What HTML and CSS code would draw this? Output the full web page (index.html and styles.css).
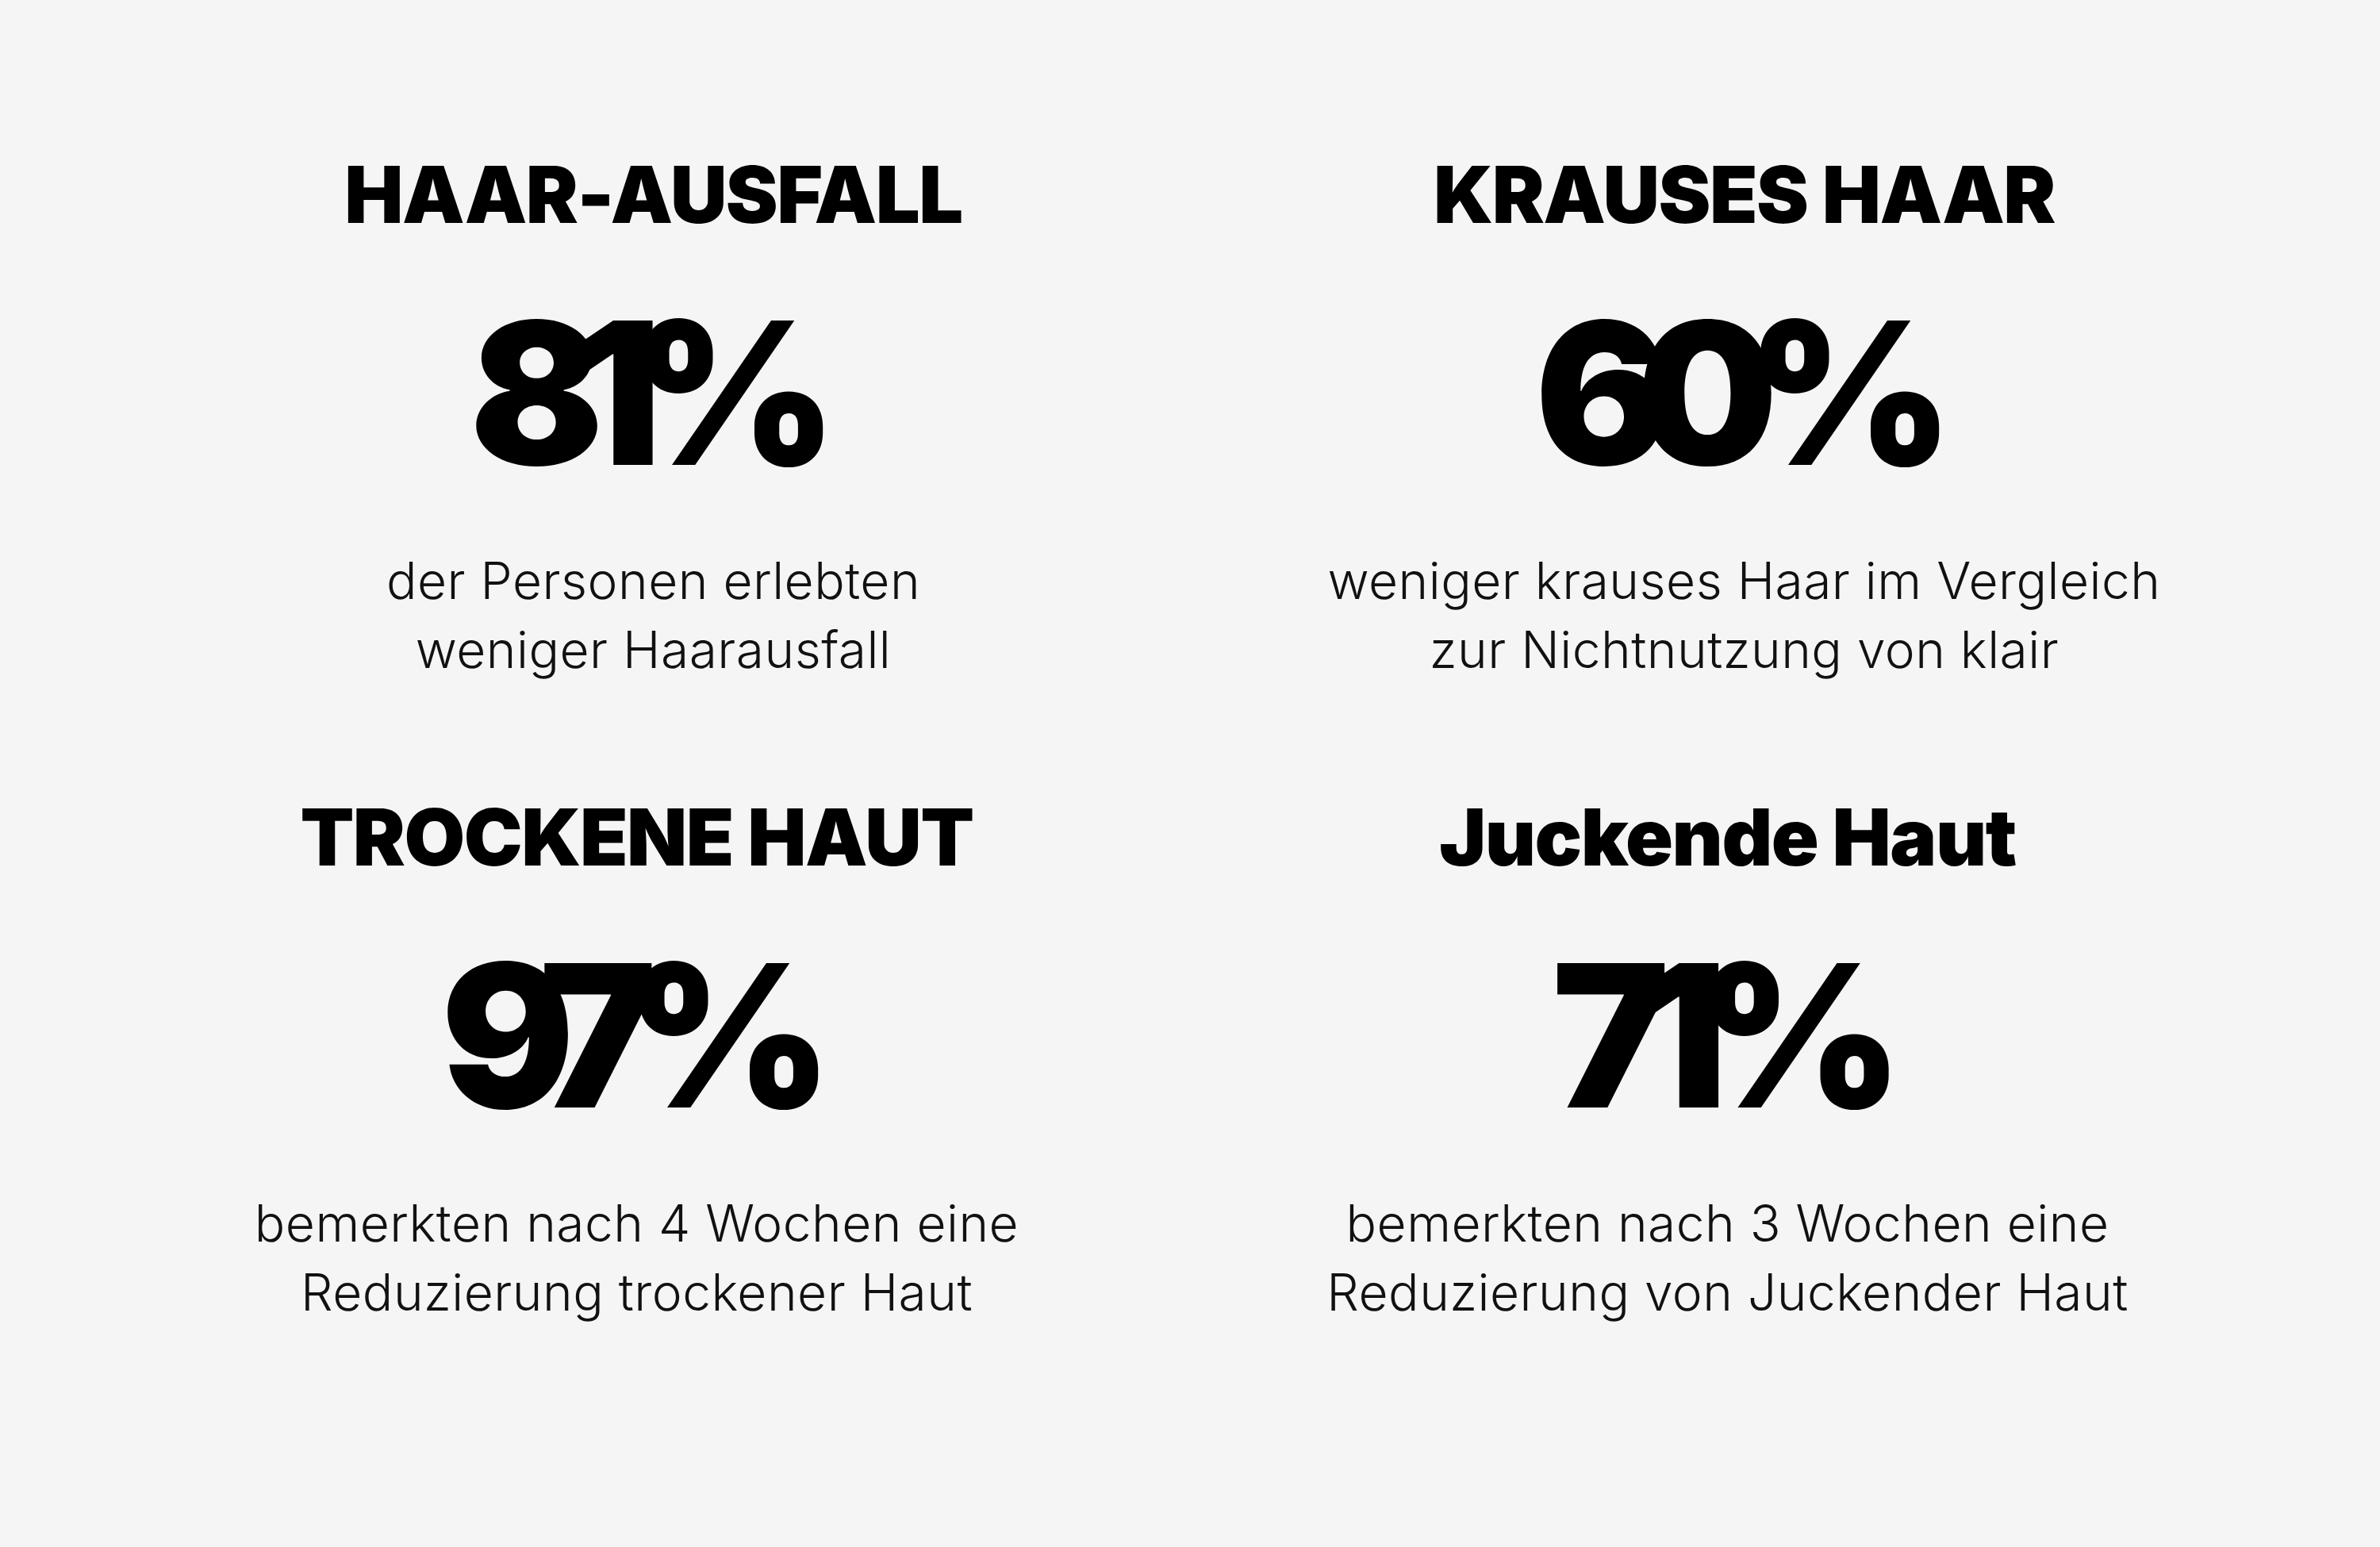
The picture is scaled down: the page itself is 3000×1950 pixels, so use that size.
FILE: index.html
```html
<!DOCTYPE html>
<html lang="de">
<head>
<meta charset="utf-8">
<title>Ergebnisse</title>
<link rel="stylesheet" href="styles.css">
</head>
<body>
<main class="stats">
  <section class="stat stat--top">
    <h2 class="stat-title">HAAR-AUSFALL</h2>
    <p class="stat-value">81%</p>
    <p class="stat-text">der Personen erlebten<br>weniger Haarausfall</p>
  </section>
  <section class="stat stat--top">
    <h2 class="stat-title">KRAUSES HAAR</h2>
    <p class="stat-value">60%</p>
    <p class="stat-text">weniger krauses Haar im Vergleich<br>zur Nichtnutzung von klair</p>
  </section>
  <section class="stat stat--bottom">
    <h2 class="stat-title">TROCKENE HAUT</h2>
    <p class="stat-value">97%</p>
    <p class="stat-text">bemerkten nach 4 Wochen eine<br>Reduzierung trockener Haut</p>
  </section>
  <section class="stat stat--bottom">
    <h2 class="stat-title">Juckende Haut</h2>
    <p class="stat-value">71%</p>
    <p class="stat-text">bemerkten nach 3 Wochen eine<br>Reduzierung von Juckender Haut</p>
  </section>
</main>
</body>
</html>
```
FILE: styles.css
```css
html, body {
  margin: 0;
  padding: 0;
  background: #f5f5f5;
}

body {
  font-family: Inter, Roboto, "Liberation Sans", sans-serif;
  color: #000;
}

.stats {
  width: 2750px;
  margin: 0 auto;
  padding-top: 196px;
  display: grid;
  grid-template-columns: 1fr 1fr;
  row-gap: 144px;
}

.stat {
  display: flex;
  flex-direction: column;
  align-items: center;
  text-align: center;
}

.stat--top {
  padding-left: 22px;
}

.stat--bottom {
  padding-right: 20px;
}

.stat-title {
  margin: 0;
  font-family: Inter, Roboto, "Liberation Sans", sans-serif;
  font-weight: 900;
  font-size: 99px;
  line-height: 1;
  letter-spacing: -1.5px;
  white-space: nowrap;
}

.stat-value {
  margin: 75px 0 0;
  padding-right: 40px;
  font-family: Inter, Roboto, "Liberation Sans", sans-serif;
  font-weight: 900;
  font-size: 250px;
  line-height: 1;
  letter-spacing: -40px;
  white-space: nowrap;
}

.stat-text {
  margin: 68px 0 0;
  font-family: Inter, Roboto, "Liberation Sans", sans-serif;
  font-weight: 300;
  font-size: 64px;
  line-height: 87px;
  letter-spacing: 0.5px;
  color: #111;
  white-space: nowrap;
}
```
